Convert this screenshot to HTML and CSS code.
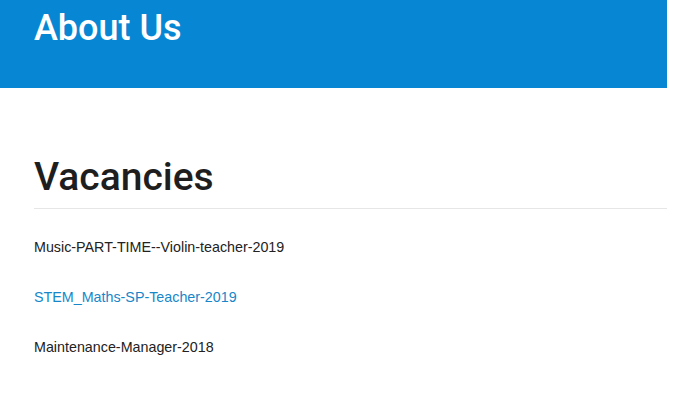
FILE: index.html
```html
<!DOCTYPE html>
<html lang="en">
<head>
<meta charset="utf-8">
<title>About Us</title>
<link rel="stylesheet" href="styles.css">
</head>
<body>
<div class="page">
  <header class="banner">
    <h1 class="banner-title">About Us</h1>
  </header>
  <main class="content">
    <h2 class="section-title">Vacancies</h2>
    <ul class="vacancy-list">
      <li class="vacancy"><a class="vacancy-link" href="#">Music-PART-TIME--Violin-teacher-2019</a></li>
      <li class="vacancy"><a class="vacancy-link is-active" href="#">STEM_Maths-SP-Teacher-2019</a></li>
      <li class="vacancy"><a class="vacancy-link" href="#">Maintenance-Manager-2018</a></li>
    </ul>
  </main>
</div>
</body>
</html>
```

FILE: styles.css
```css
html, body {
  margin: 0;
  padding: 0;
  background: #ffffff;
}

.page {
  width: 667px;
}

.banner {
  background: #0787d3;
  height: 88px;
  padding: 0 34px;
  box-sizing: border-box;
}

.banner-title {
  margin: 0;
  padding-top: 6px;
  font-family: "Roboto", "Lato", sans-serif;
  font-weight: 500;
  font-size: 36px;
  line-height: 44px;
  color: #ffffff;
}

.content {
  padding: 0 0 0 34px;
}

.section-title {
  margin: 0;
  padding-top: 65px;
  padding-bottom: 7px;
  font-family: "Roboto", "Lato", sans-serif;
  font-weight: 500;
  font-size: 39px;
  line-height: 48px;
  color: #1e1e1e;
  border-bottom: 1px solid #e6e6e6;
}

.vacancy-list {
  list-style: none;
  margin: 0;
  padding: 28px 0 0;
}

.vacancy {
  height: 50px;
  font-family: "Liberation Sans", Arial, sans-serif;
  font-size: 14.3px;
  line-height: 20px;
}

.vacancy-link {
  color: #222222;
  text-decoration: none;
}

.vacancy-link.is-active {
  color: #1787c9;
}
```
